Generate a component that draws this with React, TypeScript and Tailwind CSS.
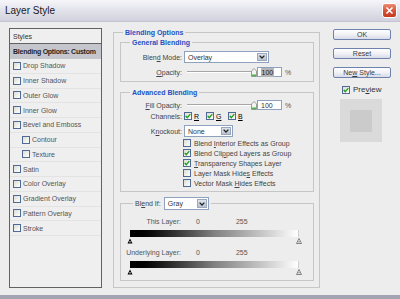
import React from "react";

type Effect = { label: string; indent?: boolean };

const effects: Effect[] = [
  { label: "Drop Shadow" },
  { label: "Inner Shadow" },
  { label: "Outer Glow" },
  { label: "Inner Glow" },
  { label: "Bevel and Emboss" },
  { label: "Contour", indent: true },
  { label: "Texture", indent: true },
  { label: "Satin" },
  { label: "Color Overlay" },
  { label: "Gradient Overlay" },
  { label: "Pattern Overlay" },
  { label: "Stroke" },
];

const U = ({ children }: { children: React.ReactNode }) => (
  <span className="underline decoration-[0.5px] underline-offset-[1px]">{children}</span>
);

function Check({ checked }: { checked?: boolean }) {
  return (
    <span className="w-[8px] h-[8px] shrink-0 border border-[#4f6a94] bg-linear-to-br from-[#dcdcd4] to-white flex items-center justify-center">
      {checked && (
        <svg width="6" height="6" viewBox="0 0 6 6">
          <path d="M0.7 2.9 L2.3 4.6 L5.3 1.1" fill="none" stroke="#22a022" strokeWidth="1.4" />
        </svg>
      )}
    </span>
  );
}

function Select({ value, w, h = 12 }: { value: string; w: number; h?: number }) {
  return (
    <div
      className="flex items-stretch border border-[#8ea2c0] bg-white"
      style={{ width: w, height: h }}
    >
      <span className="flex-1 flex items-center pl-[3px] text-[#333]">{value}</span>
      <span className="w-[10px] m-[1px] bg-linear-to-b from-[#dfe3ea] to-[#b9c2d2] border border-[#9aa7bd] flex items-center justify-center">
        <svg width="6" height="4" viewBox="0 0 6 4">
          <path d="M0.6 0.6 L3 3 L5.4 0.6" fill="none" stroke="#222" strokeWidth="1.3" />
        </svg>
      </span>
    </div>
  );
}

function Slider({ selected }: { selected?: boolean }) {
  return (
    <div className="flex items-center">
      <div className="pl-[3px] flex items-center w-[73px]">
        <div className="w-[64px] h-[2px] border-t border-[#a6a6a6] border-b border-b-white" />
        <svg width="6" height="9" viewBox="0 0 6 9" className="shrink-0">
          <path d="M0.5 3 L3 0.5 L5.5 3 L5.5 8.5 L0.5 8.5 Z" fill="#f4f4f0" stroke="#7c8a7c" strokeWidth="0.8" />
          <rect x="1" y="6.5" width="4" height="1.6" fill="#4cb04c" />
        </svg>
      </div>
      <div className="w-[25px] h-[10px] border border-[#8ea2c0] bg-white flex items-center pl-[3px] text-[#333]">
        <span className={selected ? "bg-[#b4b4b4] text-[#222] px-[0.5px]" : ""}>100</span>
      </div>
      <span className="ml-[3px] text-[#555]">%</span>
    </div>
  );
}

function GradientBar() {
  return (
    <div className="ml-[9px] w-[169px]">
      <div className="h-[7px] bg-linear-to-r from-black via-[#808080] to-white border-r border-[#cfcfcf]" />
      <div className="mt-[1px] h-[6px] -mx-[3px] flex justify-between">
        <svg width="6" height="6" viewBox="0 0 6 6">
          <path d="M0.5 5.5 L3 0.5 L5.5 5.5 Z" fill="#000" />
          <rect x="2.5" y="3" width="1" height="1.5" fill="#fff" />
        </svg>
        <svg width="6" height="6" viewBox="0 0 6 6">
          <path d="M0.5 5.5 L3 0.5 L5.5 5.5 Z" fill="#fff" stroke="#666" strokeWidth="0.8" />
          <rect x="2.5" y="3" width="1" height="1.5" fill="#666" />
        </svg>
      </div>
    </div>
  );
}

function Button({ children }: { children: React.ReactNode }) {
  return (
    <div className="w-[58px] h-[11px] rounded-[2px] border border-[#6f82ad] bg-linear-to-b from-white via-[#f1f1f6] to-[#d8dbe8] flex items-center justify-center text-[#3a3a3a]">
      {children}
    </div>
  );
}

export default function App() {
  return (
    <div className="w-[400px] h-[299px] bg-[#ededed] flex flex-col overflow-hidden text-[7px] leading-[9px] [font-family:'Liberation_Sans',Arial,sans-serif]">
      {/* title bar */}
      <div className="h-[22px] shrink-0 bg-linear-to-b from-[#f6f6fa] via-[#e2e2ea] to-[#d2d2de] border-b border-[#c4c4d0] flex items-center justify-between pl-[5px] pr-[3px]">
        <span className="text-[10px] leading-[12px] text-[#1a1a1a]">Layer Style</span>
        <div className="w-[15px] h-[15px] rounded-[3px] border border-white bg-linear-to-b from-[#e88c70] via-[#d9553a] to-[#c23a1c] flex items-center justify-center">
          <svg width="9" height="9" viewBox="0 0 9 9">
            <path d="M1.5 1.5 L7.5 7.5 M7.5 1.5 L1.5 7.5" stroke="#fff" strokeWidth="1.6" />
          </svg>
        </div>
      </div>

      {/* body */}
      <div className="flex-1 flex items-start">
        {/* styles list */}
        <div className="ml-[9px] mt-[6px] w-[93px] h-[260px] border border-[#626262] bg-[#efefef] flex flex-col">
          <div className="h-[15px] shrink-0 border-b border-[#626262] flex items-center pl-[3px] text-[#333]">Styles</div>
          <div className="h-[15px] shrink-0 bg-[#c5c5cd] flex items-center pl-[3px] font-bold text-[#262626] whitespace-nowrap tracking-[-0.25px]">
            Blending Options: Custom
          </div>
          {effects.map((e) => (
            <div
              key={e.label}
              className={`h-[14.75px] shrink-0 flex items-center gap-[2px] border-b border-[#e3e3e3] text-[#555] ${e.indent ? "pl-[12px]" : "pl-[3px]"}`}
            >
              <Check />
              <span>{e.label}</span>
            </div>
          ))}
        </div>

        {/* blending options */}
        <fieldset className="ml-[11px] mt-[5.5px] w-[207px] h-[260.5px] border border-[#c6c6c6] min-w-0">
          <legend className="ml-[9px] px-[2px] font-bold text-[#2452c4]">Blending Options</legend>
          <div className="pl-[6px] pr-[5px]">
            {/* general */}
            <fieldset className="mt-[1px] border border-[#c6c6c6] min-w-0">
              <legend className="ml-[9px] px-[2px] font-bold text-[#2452c4]">General Blending</legend>
              <div className="pt-[4.5px] pb-[4px] flex flex-col gap-[4px]">
                <div className="flex items-center">
                  <span className="w-[61px] text-right text-[#444]">Blen<U>d</U> Mode:</span>
                  <div className="ml-[2px]">
                    <Select value="Overlay" w={85} />
                  </div>
                </div>
                <div className="flex items-center">
                  <span className="w-[61px] text-right text-[#444]"><U>O</U>pacity:</span>
                  <div className="ml-[2px]">
                    <Slider selected />
                  </div>
                </div>
              </div>
            </fieldset>

            {/* advanced */}
            <fieldset className="mt-[5.5px] border border-[#c6c6c6] min-w-0">
              <legend className="ml-[9px] px-[2px] font-bold text-[#2452c4]">Advanced Blending</legend>
              <div className="pt-[3.5px] pb-[3px] flex flex-col">
                <div className="flex items-center h-[10px]">
                  <span className="w-[61px] text-right text-[#444]"><U>F</U>ill Opacity:</span>
                  <div className="ml-[2px]">
                    <Slider />
                  </div>
                </div>
                <div className="mt-[1px] flex items-center h-[10px]">
                  <span className="w-[61px] text-right text-[#444]">Channels:</span>
                  <div className="ml-[2px] flex items-center gap-[2px] w-[22px]">
                    <Check checked />
                    <U>R</U>
                  </div>
                  <div className="flex items-center gap-[2px] w-[22px]">
                    <Check checked />
                    <U>G</U>
                  </div>
                  <div className="flex items-center gap-[2px]">
                    <Check checked />
                    <U>B</U>
                  </div>
                </div>
                <div className="mt-[4px] flex items-center">
                  <span className="w-[61px] text-right text-[#444]">K<U>n</U>ockout:</span>
                  <div className="ml-[2px]">
                    <Select value="None" w={49} />
                  </div>
                </div>
                <div className="mt-[1px] ml-[62px] flex flex-col text-[#444]">
                  {[
                    { t: <>Blend <U>I</U>nterior Effects as Group</>, c: false },
                    { t: <>Blend Cli<U>p</U>ped Layers as Group</>, c: true },
                    { t: <><U>T</U>ransparency Shapes Layer</>, c: true },
                    { t: <>Layer Mask Hide<U>s</U> Effects</>, c: false },
                    { t: <>Vector Mask <U>H</U>ides Effects</>, c: false },
                  ].map((r, i) => (
                    <div key={i} className="h-[10px] flex items-center gap-[3px]">
                      <Check checked={r.c} />
                      <span>{r.t}</span>
                    </div>
                  ))}
                </div>
              </div>
            </fieldset>

            {/* blend if */}
            <fieldset className="mt-[5px] border border-[#c6c6c6] min-w-0">
              <legend className="ml-[12px] px-[2px]">
                <div className="flex items-center text-[#444]">
                  <span>Bl<U>e</U>nd If:</span>
                  <div className="ml-[3px]">
                    <Select value="Gray" w={45} h={13} />
                  </div>
                </div>
              </legend>
              <div className="pt-[6.5px] pb-[5px] text-[#555]">
                <div className="flex items-center h-[9px]">
                  <span className="w-[60px] text-right">This Layer:</span>
                  <span className="ml-[15px]">0</span>
                  <span className="ml-[36px]">255</span>
                </div>
                <div className="mt-[4.5px]">
                  <GradientBar />
                </div>
                <div className="mt-[3.5px] flex items-center h-[9px]">
                  <span className="w-[60px] text-right">Underlying Layer:</span>
                  <span className="ml-[15px]">0</span>
                  <span className="ml-[36px]">255</span>
                </div>
                <div className="mt-[4.5px]">
                  <GradientBar />
                </div>
              </div>
            </fieldset>
          </div>
        </fieldset>

        {/* buttons */}
        <div className="ml-[13px] mt-[7px] flex flex-col">
          <div className="flex flex-col gap-[8px]">
            <Button>OK</Button>
            <Button>Reset</Button>
            <Button>
              <span>Ne<U>w</U> Style...</span>
            </Button>
          </div>
          <div className="mt-[7px] ml-[9px] flex items-center gap-[3px] text-[8px] text-[#333]">
            <Check checked />
            <span>Pre<U>v</U>iew</span>
          </div>
          <div className="mt-[5px] ml-[7px] w-[42px] h-[43px] bg-[#dadada] flex items-center justify-center">
            <div className="w-[22px] h-[22px] bg-[#cbcbcb]" />
          </div>
        </div>
      </div>

      {/* bottom frame */}
      <div className="h-[4px] shrink-0 bg-[#a3a3b4]" />
    </div>
  );
}
